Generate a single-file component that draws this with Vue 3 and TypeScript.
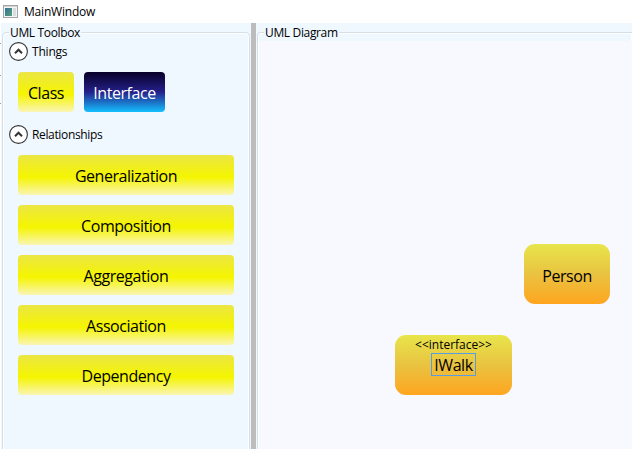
<script setup lang="ts">
interface DiagramNode {
  name: string
  kind: 'class' | 'interface'
}

const relationships: string[] = ['Generalization', 'Composition', 'Aggregation', 'Association', 'Dependency']
const nodes: DiagramNode[] = [
  { name: 'Person', kind: 'class' },
  { name: 'IWalk', kind: 'interface' },
]
</script>

<template>
  <div class="window">
    <header class="titlebar">
      <svg class="app-icon" width="15" height="13" viewBox="0 0 15 13">
        <defs>
          <linearGradient id="appFill" x1="0" y1="0" x2="1" y2="1">
            <stop offset="0" stop-color="#356f9c" />
            <stop offset="1" stop-color="#58a178" />
          </linearGradient>
        </defs>
        <rect x=".5" y=".5" width="14" height="12" fill="#f5f5f5" stroke="#a1a5a8" />
        <rect x="1" y="1" width="13" height="1" fill="#d2d4d6" />
        <rect x="2" y="3" width="7" height="8" fill="url(#appFill)" />
        <rect x="10" y="3" width="3" height="8" fill="#d9dddd" />
      </svg>
      <span class="title">MainWindow</span>
    </header>
    <main class="body">
      <div class="edge"><i class="tick t1"></i><i class="tick t2"></i><i class="tick t3"></i></div>
      <section class="toolbox">
        <div class="group">
          <h2 class="legend"><span class="toolbox-label">UML Toolbox</span></h2>
          <div class="expander first">
            <svg width="19" height="19" viewBox="0 0 19 19">
              <circle cx="9.5" cy="9.5" r="8.9" fill="#fff" stroke="#333" stroke-width="1.1" />
              <path d="M6 11.2 9.5 7.7 13 11.2" fill="none" stroke="#333" stroke-width="2" />
            </svg>
            <span class="things-label">Things</span>
          </div>
          <div class="things">
            <button class="tool class-tool">Class</button>
            <button class="tool selected">Interface</button>
          </div>
          <div class="expander">
            <svg width="19" height="19" viewBox="0 0 19 19">
              <circle cx="9.5" cy="9.5" r="8.9" fill="#fff" stroke="#333" stroke-width="1.1" />
              <path d="M6 11.2 9.5 7.7 13 11.2" fill="none" stroke="#333" stroke-width="2" />
            </svg>
            <span class="relationships-label">Relationships</span>
          </div>
          <div class="relationships">
            <button v-for="item in relationships" :key="item" class="tool">{{ item }}</button>
          </div>
        </div>
      </section>
      <div class="splitter"></div>
      <section class="diagram">
        <div class="group">
          <h2 class="legend"><span class="diagram-label">UML Diagram</span></h2>
          <div class="canvas">
            <div v-for="node in nodes" :key="node.name" class="node" :class="'node-' + node.kind">
              <span v-if="node.kind === 'interface'" class="stereotype">&lt;&lt;interface&gt;&gt;</span>
              <span class="node-name">{{ node.name }}</span>
            </div>
          </div>
        </div>
      </section>
    </main>
  </div>
</template>

<style>
body { overflow: hidden; }
</style>

<style scoped>
* { box-sizing: border-box; }
.window { width: 632px; height: 449px; display: flex; flex-direction: column; overflow: hidden; background: #fff; color: #000; font: 12px "Open Sans", "Noto Sans", sans-serif; }
.titlebar { height: 23px; flex: none; display: flex; align-items: center; padding-left: 3px; gap: 6px; }
.title { font-size: 12px; letter-spacing: -.2px; }
.body { flex: 1; min-height: 0; display: grid; grid-template-columns: 1px 250px 5px 1fr; background: #f0f8ff; }
.edge { background: #fff; position: relative; }
.tick { position: absolute; left: 0; width: 1px; height: 1px; background: #999; }
.t1 { top: 20px; }
.t2 { top: 52px; }
.t3 { top: 80px; }
.toolbox { padding: 9px 1px 0; min-width: 0; }
.diagram { padding: 9px 0 0 1px; min-width: 0; }
.splitter { background: #bcbcbc; }
.group { height: 430px; border: 1px solid #d5dfe5; border-radius: 4px 4px 0 0; box-shadow: inset 0 0 0 1px #fff; }
.diagram .group { border-right: 0; border-radius: 4px 0 0 0; }
.legend { margin: -8px 0 0 6px; height: 16px; width: fit-content; padding: 0 1px; background: #f0f8ff; font-size: 12px; line-height: 16px; font-weight: 400; white-space: nowrap; }
.legend span, .expander span { display: block; letter-spacing: -.35px; }
.expander .things-label { letter-spacing: -.2px; }
.expander { height: 19px; display: flex; align-items: center; gap: 4px; padding-left: 6px; line-height: 17px; }
.first { margin-top: 1px; }
.expander svg { overflow: visible; }
.things { display: flex; gap: 10px; padding: 11px 0 13px 15px; }
.tool { height: 40px; border: 0; border-radius: 4px; padding: 2px 0 0; color: #000; background: linear-gradient(#ebe645 0%, #f5f500 55%, #faf5b5 100%); font: 16px "Open Sans", "Noto Sans", sans-serif; letter-spacing: -.45px; }
.class-tool { width: 56px; }
.selected { width: 81px; color: #fff; background: linear-gradient(#080028 0%, #24208a 50%, #14bfff 100%); }
.relationships { display: flex; flex-direction: column; gap: 10px; padding: 11px 15px 0; }
.canvas { position: relative; height: 409px; margin-left: 1px; background: #f8f8ff; }
.node { position: absolute; height: 60px; display: flex; flex-direction: column; align-items: center; border-radius: 11px; background: linear-gradient(#e8e54b, #e9c341 50%, #ffa51f); }
.node-class { left: 265px; top: 203px; width: 86px; justify-content: center; padding-top: 3px; }
.node-interface { left: 136px; top: 294px; width: 117px; padding-top: 2px; }
.stereotype { font-size: 12px; line-height: 16px; letter-spacing: 0; }
.node-name { font-size: 16px; line-height: 22px; letter-spacing: -.45px; }
.node-interface .node-name { width: 45px; height: 23px; border: 1px solid #569de5; text-align: center; line-height: 22px; }
</style>
